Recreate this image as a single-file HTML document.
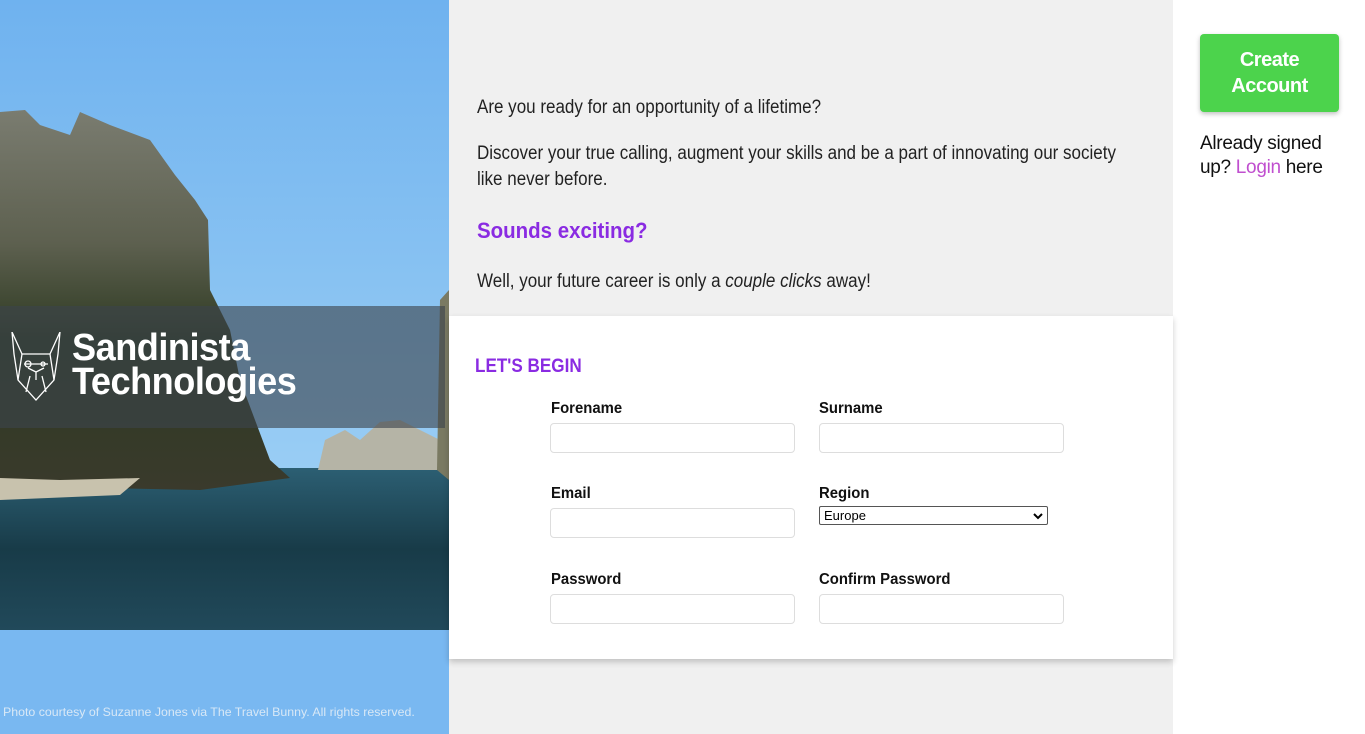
<!DOCTYPE html>
<html><head><meta charset="utf-8"><style>
*{box-sizing:border-box;margin:0;padding:0}
body{width:1365px;height:734px;overflow:hidden;background:#fff;font-family:"Liberation Sans",sans-serif;position:relative}
#left{position:absolute;left:0;top:0;width:449px;height:734px;background:#78b7f0;overflow:hidden}
#mid{position:absolute;left:449px;top:0;width:724px;height:734px;background:#f0f0f0}
.p{position:absolute;left:477px;font-size:19px;color:#222;line-height:26px;transform:scaleX(.895);transform-origin:0 0;white-space:nowrap}
#card{position:absolute;left:449px;top:316px;width:724px;height:343px;background:#fff;box-shadow:0 3px 6px rgba(0,0,0,.2)}
.lbl{position:absolute;font-size:16px;font-weight:bold;color:#111;transform:scaleX(.93);transform-origin:0 0}
.in{position:absolute;width:245px;height:30px;border:1px solid #ddd;border-radius:4px;background:#fff}
</style></head><body>
<div id="left">
<svg width="449" height="734" style="position:absolute;left:0;top:0">
<defs>
<linearGradient id="sky" x1="0" y1="0" x2="0" y2="1"><stop offset="0" stop-color="#6fb2ef"/><stop offset="1" stop-color="#99cdf4"/></linearGradient>
<linearGradient id="sea" x1="0" y1="0" x2="0" y2="1"><stop offset="0" stop-color="#2c5f73"/><stop offset=".5" stop-color="#183b48"/><stop offset="1" stop-color="#21495a"/></linearGradient>
<linearGradient id="rock" x1="0" y1="0" x2="0" y2="1"><stop offset="0" stop-color="#7a7c70"/><stop offset=".35" stop-color="#5d604f"/><stop offset=".6" stop-color="#2e3a22"/><stop offset="1" stop-color="#3a3a2c"/></linearGradient>
</defs>
<rect width="449" height="470" fill="url(#sky)"/>
<rect y="468" width="449" height="162" fill="url(#sea)"/>
<rect y="630" width="449" height="104" fill="#79b8f1"/>
<path d="M0 112 L25 110 L40 125 L70 135 L80 112 L110 125 L150 140 L175 175 L195 200 L208 220 L210 290 L230 330 L240 380 L255 420 L270 460 L290 478 L200 490 L100 488 L0 492 Z" fill="url(#rock)"/>
<path d="M0 478 L60 480 L140 478 L120 495 L0 500 Z" fill="#c8c2ad"/>
<path d="M318 470 L325 440 L345 430 L360 440 L380 422 L400 420 L420 430 L440 440 L440 470 Z" fill="#b5b4a6"/>
<path d="M437 470 L440 300 L449 290 L449 480 Z" fill="#7a7a62"/>
</svg>
<div style="position:absolute;left:0;top:306px;width:445px;height:122px;background:rgba(60,68,76,.62)"></div>
<svg width="52" height="72" viewBox="0 0 52 72" style="position:absolute;left:10px;top:332px" fill="none" stroke="#fff" stroke-width="1.3">
<path d="M2 0 L12 22 L40 22 L50 0 L48 22 L44 48 L26 68 L8 48 L4 22 Z"/><path d="M12 22 L8 48 M40 22 L44 48 M14 32 L38 32 M18 36 L26 40 L34 36 M20 44 L16 60 M32 44 L36 60 M26 40 L26 48"/><circle cx="18" cy="32" r="3"/><circle cx="33" cy="32" r="2"/>
</svg>
<div style="position:absolute;left:72px;top:331px;color:#fff;font-size:38px;font-weight:bold;line-height:34px;letter-spacing:-.5px;transform:scaleX(.95);transform-origin:0 0">Sandinista<br>Technologies</div>
<div style="position:absolute;left:3px;top:705px;color:#d8e8f6;font-size:12px;transform:scaleX(1.03);transform-origin:0 0">Photo courtesy of Suzanne Jones via The Travel Bunny. All rights reserved.</div>
</div>
<div id="mid"></div>
<div class="p" style="top:95px">Are you ready for an opportunity of a lifetime?</div>
<div class="p" style="top:141px">Discover your true calling, augment your skills and be a part of innovating our society<br>like never before.</div>
<div style="position:absolute;left:477px;top:218px;font-size:22px;font-weight:bold;color:#8a2be2;transform:scaleX(.93);transform-origin:0 0">Sounds exciting?</div>
<div class="p" style="top:269px">Well, your future career is only a <i>couple clicks</i> away!</div>
<div id="card"></div>
<div style="position:absolute;left:475px;top:356px;font-size:19px;font-weight:bold;color:#8a2be2;transform:scaleX(.9);transform-origin:0 0">LET'S BEGIN</div>
<div class="lbl" style="left:551px;top:400px">Forename</div>
<div class="lbl" style="left:819px;top:400px">Surname</div>
<div class="in" style="left:550px;top:423px"></div>
<div class="in" style="left:819px;top:423px"></div>
<div class="lbl" style="left:551px;top:485px">Email</div>
<div class="lbl" style="left:819px;top:485px">Region</div>
<div class="in" style="left:550px;top:508px"></div>
<div style="position:absolute;left:819px;top:506px;width:229px;height:19px;border:1px solid #555;border-radius:2px;background:#fff;font-size:13px;padding-left:4px;line-height:17px">Europe<svg width="10" height="8" viewBox="0 0 10 8" style="position:absolute;right:4px;top:5px"><path d="M1 2 L5 6 L9 2" fill="none" stroke="#000" stroke-width="2"/></svg></div>
<div class="lbl" style="left:551px;top:571px">Password</div>
<div class="lbl" style="left:819px;top:571px">Confirm Password</div>
<div class="in" style="left:550px;top:594px"></div>
<div class="in" style="left:819px;top:594px"></div>
<div style="position:absolute;left:1200px;top:34px;width:139px;height:78px;background:#4cd34c;border-radius:4px;box-shadow:0 2px 5px rgba(0,0,0,.25);color:#fff;font-size:20px;font-weight:bold;text-align:center;line-height:26px;padding-top:13px;letter-spacing:-.5px">Create<br>Account</div>
<div style="position:absolute;left:1200px;top:132px;font-size:19px;line-height:24px;color:#111;letter-spacing:-.3px">Already signed<br>up? <span style="color:#c04fcf">Login</span> here</div>
</body></html>
